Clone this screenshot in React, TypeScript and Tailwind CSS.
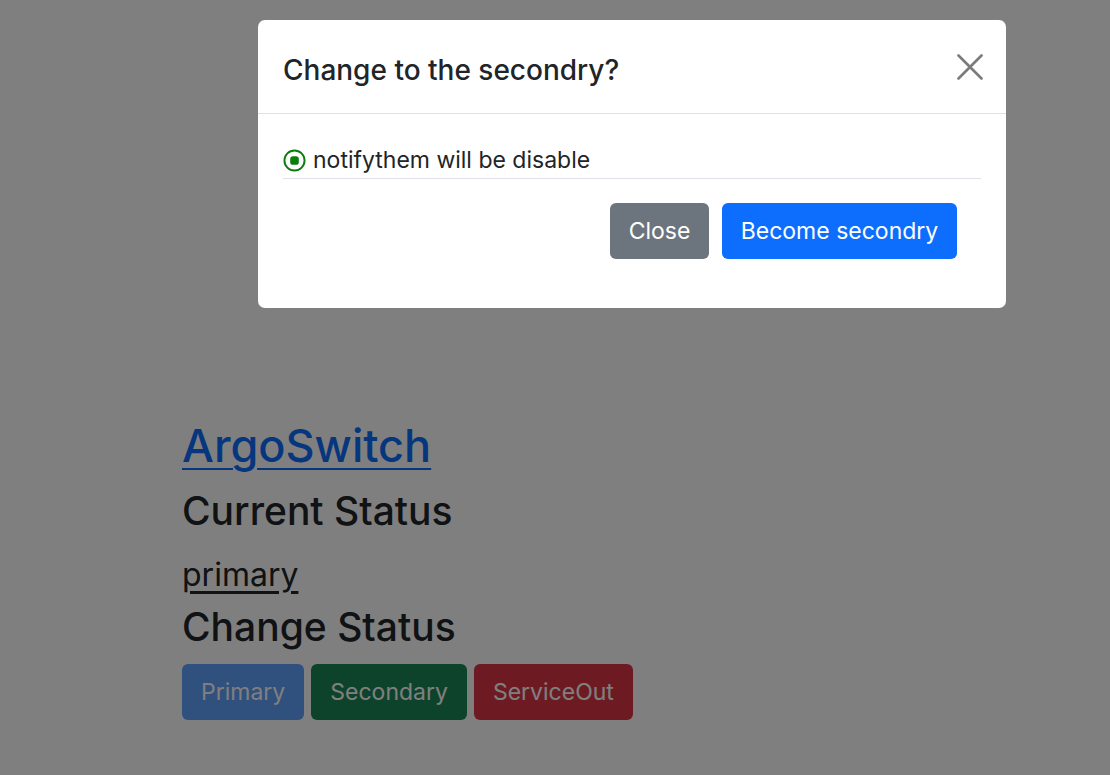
function RadioMark() {
    return (
        <svg width="23" height="23" viewBox="0 0 24 24" className="shrink-0">
            <circle cx="12" cy="12" r="10.5" fill="none" stroke="#0a7d0a" strokeWidth="2" />
            <rect x="7.5" y="7.5" width="9" height="9" rx="3" fill="#0a7d0a" />
        </svg>
    )
}

function CloseIcon() {
    return (
        <svg width="26" height="26" viewBox="0 0 26 26" className="shrink-0">
            <path d="M1.5 1.5 L24.5 24.5 M24.5 1.5 L1.5 24.5" stroke="#7b7b7b" strokeWidth="2.6" strokeLinecap="round" />
        </svg>
    )
}

export default function App() {
    return (
        <div className="relative min-h-[775px] bg-white text-[#212529] font-['Inter','Liberation_Sans',sans-serif]">
            <div className="pl-[182px] pt-[414px]">
                <a href="#" className="block w-fit text-[45px] leading-[64px] font-medium text-[#0d6efd] underline decoration-2 underline-offset-[6px]">ArgoSwitch</a>
                <h2 className="text-[39px] leading-[56px] font-medium mt-[5px]">Current Status</h2>
                <div className="w-fit text-[32px] leading-[40px] underline underline-offset-[5px] mt-[16px]">primary</div>
                <h2 className="text-[39px] leading-[56px] font-medium mt-[4px]">Change Status</h2>
                <div className="flex gap-[7px] mt-[9px]">
                    <button className="h-[56px] px-[19px] rounded-[6px] bg-[#0d6efd] text-white text-[23px] opacity-65">Primary</button>
                    <button className="h-[56px] px-[19px] rounded-[6px] bg-[#198754] text-white text-[23px]">Secondary</button>
                    <button className="h-[56px] px-[19px] rounded-[6px] bg-[#dc3545] text-white text-[23px]">ServiceOut</button>
                </div>
            </div>

            <div className="fixed inset-0 bg-black/50">
                <div className="ml-[258px] mt-[20px] w-[748px] h-[288px] rounded-[7px] bg-white flex flex-col">
                    <div className="h-[94px] flex items-center justify-between pl-[25px] pr-[23px] border-b border-[#dee2e6]">
                        <h3 className="text-[28px] font-medium text-[#212529] mt-[6px]">Change to the secondry?</h3>
                        <CloseIcon />
                    </div>
                    <div className="px-[25px]">
                        <div className="flex items-center gap-[7px] pt-[32px] pb-[4px] border-b border-[#dee2e6]">
                            <RadioMark />
                            <span className="text-[23px] leading-[28px] text-[#212529]">notifythem will be disable</span>
                        </div>
                        <div className="flex justify-end gap-[13px] mt-[24px] pr-[24px]">
                            <button className="h-[56px] w-[99px] rounded-[6px] bg-[#6c757d] text-white text-[23px]">Close</button>
                            <button className="h-[56px] w-[235px] rounded-[6px] bg-[#0d6efd] text-white text-[23px]">Become secondry</button>
                        </div>
                    </div>
                </div>
            </div>
        </div>
    )
}
